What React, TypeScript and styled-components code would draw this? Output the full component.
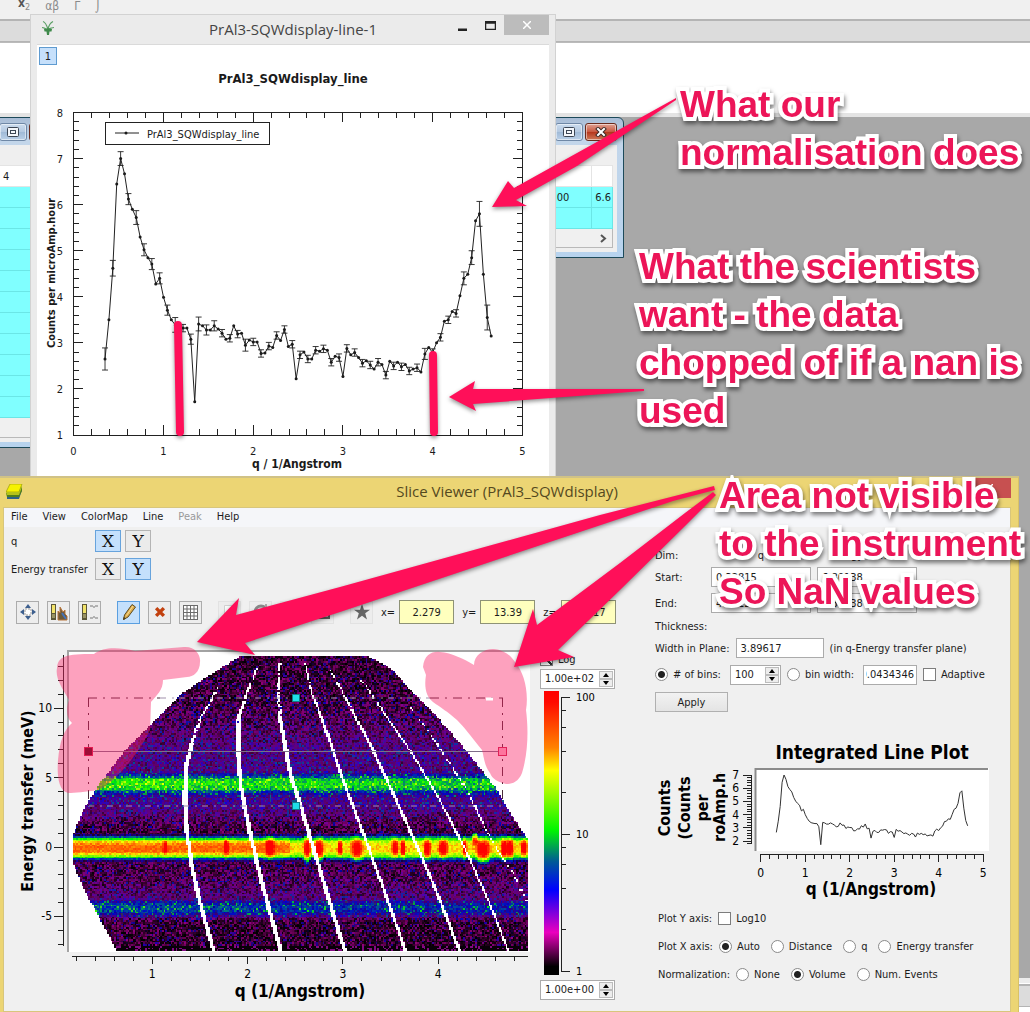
import React, { useEffect, useRef } from "react";
import styled, { createGlobalStyle } from "styled-components";

const ui = `"DejaVu Sans Condensed", "Noto Sans", sans-serif`;
const caption = `"Open Sans", "Noto Sans", sans-serif`;
const serif = `"DejaVu Serif", serif`;
const pink = "#ff0f59";

const GlobalStyle = createGlobalStyle`
  * { box-sizing: border-box; }
  body { margin: 0; font-family: ${ui}; font-size: 11px; color: #1c1c1c; }
  button, input { font: inherit; color: inherit; }
`;

/* ---------- measured data ---------- */

const BIN = 0.0434346;
const FIRST_Q = 0.351;
const COUNTS = [
  2.65, 3.5, 4.62, 6.45, 7.0, 6.67, 6.12, 5.9, 5.72, 5.3,
  5.02, 4.85, 4.71, 4.28, 4.4, 3.99, 3.71, 3.5, 3.39, 3.35,
  3.32, 3.32, 3.08, 1.72, 3.41, 3.37, 3.28, 3.28, 3.37, 3.3,
  3.21, 3.08, 3.1, 3.37, 3.19, 3.21, 2.95, 3.06, 3.02, 3.02,
  2.77, 2.78, 2.93, 2.9, 3.16, 3.05, 3.29, 2.92, 2.97, 2.22,
  2.74, 2.8, 2.65, 2.65, 2.84, 2.82, 2.87, 2.84, 2.58, 2.71,
  2.68, 2.27, 2.88, 2.74, 2.79, 2.68, 2.56, 2.61, 2.52, 2.43,
  2.58, 2.53, 2.3, 2.6, 2.5, 2.58, 2.48, 2.53, 2.39, 2.43,
  2.46, 2.37, 2.76, 2.9, 2.79, 3.0, 3.12, 3.47, 3.5, 3.68,
  3.64, 4.02, 4.4, 4.49, 4.85, 5.65, 5.8, 4.49, 3.55, 3.15,
];
const ERRORS: Record<number, number> = {
  0: 0.24, 2: 0.17, 4: 0.15, 6: 0.12, 8: 0.15, 10: 0.13, 12: 0.12, 14: 0.12, 16: 0.11,
  18: 0.16, 22: 0.11, 24: 0.15, 26: 0.11, 28: 0.11, 36: 0.13, 82: 0.12, 92: 0.14, 94: 0.15, 96: 0.27, 98: 0.27,
};
const POINTS = COUNTS.map((value, i) => ({
  q: FIRST_Q + i * BIN,
  value,
  error: i % 2 ? 0 : ERRORS[i] ?? 0.08,
}));

const range = (n: number) => Array.from({ length: n }, (_, i) => i);

/* ---------- main application behind the windows ---------- */

const Desktop = styled.main`
  position: relative;
  display: flex;
  flex-direction: column;
  min-height: 100vh;
  overflow: hidden;
  background: #f0f0f0;
`;
const FormatBar = styled.header`
  display: flex;
  align-items: flex-end;
  gap: 15px;
  height: 18px;
  padding: 0 18px 6px;
  font: 12px/12px ${ui};
  color: #8a8a8a;
  b { color: #555; }
  sub { font-size: 9px; line-height: 1; }
`;
const Band = styled.div`
  height: 23px;
  margin-top: 1px;
  background: #dcdcdc;
  border: solid #b4b4b4;
  border-width: 2px 0 1px;
`;
const Strip = styled.div`
  height: 75px;
  background: #fff;
  border: solid #bbb;
  border-width: 1px 0;
  border-bottom: 4px solid #e4e4e4;
`;
const Workspace = styled.section`
  flex: 1;
  background: #a8a8a8;
`;
const StatusArea = styled.footer`
  height: 34px;
  background: #fff;
  border-top: 5px solid #ececec;
`;

const MdiWindow = styled.section<{ $x: number; $w: number; $h: number }>`
  position: absolute;
  left: ${(p) => p.$x}px;
  top: 117px;
  width: ${(p) => p.$w}px;
  height: ${(p) => p.$h}px;
  display: flex;
  flex-direction: column;
  padding: 5px 6px;
  background: linear-gradient(#a9bdd6, #c3d6ea 22px, #b7d3ee);
  border: 1px solid #1d4a5a;
  border-radius: 6px 6px 0 0;
`;
const MdiButtons = styled.div`
  display: flex;
  justify-content: flex-end;
  gap: 2px;
  height: 18px;
`;
const MdiButton = styled.button<{ $close?: boolean }>`
  display: grid;
  place-items: center;
  width: ${(p) => (p.$close ? 32 : 28)}px;
  padding: 0;
  border: 1px solid ${(p) => (p.$close ? "#6a2a1c" : "#6f88a6")};
  border-radius: 3px;
  box-shadow: inset 0 0 0 1px #ffffff80;
  background: ${(p) =>
    p.$close ? "linear-gradient(#dfa193, #c8563d 50%, #b5351b 50%, #cf7a58)" : "linear-gradient(#cbdcee, #b3c8e0 50%, #9fb9d6 50%, #bad0e8)"};
`;
const MdiBody = styled.div`
  flex: 1;
  display: flex;
  flex-direction: column;
  margin-top: 4px;
  padding: 20px 4px 4px 0;
  background: #efefef;
`;
const MdiTable = styled.table`
  width: 100%;
  border-collapse: collapse;
  border: 1px solid #8a9096;
  background: #fff;
  th, td { height: 21px; padding: 0 3px; border: 1px solid #6be6e6; font-weight: 400; white-space: nowrap; }
  th { border-color: #e4e4e4; text-align: left; }
  td { background: #80ffff; text-align: right; }
  td:nth-child(1) { padding-right: 22px; }
  td:last-child { text-align: left; width: 20px; padding: 0 1px 0 3px; }
`;
const MdiScroll = styled.div`
  flex: 1;
  display: flex;
  justify-content: flex-end;
  align-items: center;
  padding-right: 5px;
  border: 1px solid #b9b9b9;
  border-top: 0;
  background: #f0f0f0;
`;

function MatrixWindow({ x, w, h, head, rows }: { x: number; w: number; h: number; head: string[]; rows: string[][] }) {
  return (
    <MdiWindow $x={x} $w={w} $h={h}>
      <MdiButtons>
        <MdiButton aria-label="Restore">
          <svg width="12" height="10" viewBox="0 0 12 10" fill="none" stroke="#3c4654">
            <rect x="0.5" y="0.5" width="11" height="9" rx="1" fill="#f4f7fb" />
            <rect x="3.5" y="3.5" width="5" height="3" />
          </svg>
        </MdiButton>
        <MdiButton $close aria-label="Close">
          <svg width="12" height="10" viewBox="0 0 12 10" stroke="#3f2a26" strokeWidth="4" strokeLinecap="square">
            <path d="M3 2l6 6M9 2l-6 6" />
            <path d="M3 2l6 6M9 2l-6 6" stroke="#fff" strokeWidth="2" />
          </svg>
        </MdiButton>
      </MdiButtons>
      <MdiBody>
        <MdiTable>
          <thead>
            <tr>{head.map((c, i) => <th key={i}>{c}</th>)}</tr>
          </thead>
          <tbody>
            {rows.map((r, i) => (
              <tr key={i}>{r.map((c, j) => <td key={j}>{c}</td>)}</tr>
            ))}
          </tbody>
        </MdiTable>
        <MdiScroll>
          <svg width="7" height="9" viewBox="0 0 7 9" fill="none" stroke="#555" strokeWidth="2">
            <path d="M1 1l4 3.500l-4 3.500" />
          </svg>
        </MdiScroll>
      </MdiBody>
    </MdiWindow>
  );
}

/* ---------- graph window ---------- */

const GraphWindow = styled.section`
  position: absolute;
  left: 30px;
  top: 14px;
  width: 526px;
  display: flex;
  flex-direction: column;
  padding: 0 6px;
  background: #ebebeb;
  border: 1px solid #d2d2d2;
`;
const GraphTitle = styled.div`
  display: grid;
  grid-template-columns: 130px 1fr 130px;
  height: 29px;
  color: #444;
  h2 { margin: 0; font: 15px/29px ${caption}; text-align: center; white-space: nowrap; }
  > svg { margin: 5px 4px; }
`;
const Controls = styled.div`
  display: flex;
  justify-content: flex-end;
  height: 20px;
`;
const Control = styled.button<{ $bg?: string; $w?: number }>`
  display: grid;
  place-items: center;
  width: ${(p) => p.$w ?? 28}px;
  padding: 0;
  border: 0;
  background: ${(p) => p.$bg ?? "transparent"};
`;
const GraphBody = styled.div`
  background: #fff;
  border-top: 1px solid #dadada;
  svg { display: block; }
`;
const LayerButton = styled.button`
  display: block;
  width: 18px;
  height: 18px;
  margin: 2px 2px 0;
  padding: 0;
  border: 1px solid #5f9bd0;
  background: #c6e0fb;
`;

function LineChart() {
  const X = (q: number) => 73.5 + q * 89.8;
  const Y = (v: number) => 435 - (v - 1) * 46.07;
  return (
    <svg width="100%" viewBox="37 65 512 412" fontFamily={ui} fontSize="11" fill="#1a1a1a">
      <text x="293" y="83" textAnchor="middle" fontSize="13" fontWeight="700">PrAl3_SQWdisplay_line</text>
      <g stroke="#222" fill="none" shapeRendering="crispEdges">
        <rect x="73.500" y="112.500" width="449" height="322.500" />
        {range(26).map((i) => {
          const x = X(i / 5);
          const len = i % 5 ? 6 : 10;
          return <path key={i} d={`M${x} 435v${-len}M${x} 112v${len}`} />;
        })}
        {range(36).map((i) => {
          const y = Y(1 + i / 5);
          const len = i % 5 ? 6 : 10;
          return <path key={i} d={`M73 ${y}h${len}M523 ${y}h${-len}`} />;
        })}
      </g>
      {range(6).map((i) => <text key={i} x={X(i)} y="455" textAnchor="middle">{i}</text>)}
      {range(8).map((i) => <text key={i} x="63" y={Y(i + 1) + 4} textAnchor="end">{i + 1}</text>)}
      <text x="297" y="468" textAnchor="middle" fontSize="12" fontWeight="700">q / 1/Angstrom</text>
      <text transform="translate(55 273) rotate(-90)" textAnchor="middle" fontWeight="700">Counts per microAmp.hour</text>
      <rect x="105.500" y="122.500" width="164" height="22" fill="#fff" stroke="#222" />
      <path d="M115 133h24" stroke="#222" />
      <circle cx="126" cy="133" r="1.500" />
      <text x="147" y="138">PrAl3_SQWdisplay_line</text>
      <g stroke="#222" fill="none">
        <polyline points={POINTS.map((p) => `${X(p.q)},${Y(p.value)}`).join(" ")} />
        {POINTS.filter((p) => p.error).map((p) => (
          <path key={p.q} strokeWidth="0.900" d={`M${X(p.q)} ${Y(p.value - p.error)}V${Y(p.value + p.error)}m-3 0h6M${X(p.q) - 3} ${Y(p.value - p.error)}h6`} />
        ))}
      </g>
      {POINTS.map((p) => <circle key={p.q} cx={X(p.q)} cy={Y(p.value)} r="1.500" />)}
    </svg>
  );
}

/* ---------- slice viewer window ---------- */

const ViewerWindow = styled.section`
  position: absolute;
  left: 0;
  right: 11px;
  top: 476px;
  display: flex;
  flex-direction: column;
  padding: 0 7px 0 3px;
  background: #ecd574;
  border-top: 2px solid #d0c286;
  border-right: 1px solid #d8c267;
  border-bottom: 1px solid #d9c779;
`;
const ViewerTitle = styled.div`
  display: grid;
  grid-template-columns: 180px 1fr 180px;
  height: 29px;
  color: #54491f;
  h2 { margin: 0; font: 15px/27px ${caption}; text-align: center; }
  > svg { margin: 6px 3px; }
`;
const Client = styled.div`
  background: #f0f0f0;
  border: 1px solid #d8c67c;
`;
const MenuBar = styled.nav`
  display: flex;
  gap: 15px;
  height: 19px;
  padding-left: 7px;
  padding-bottom: 2px;
  background: #f5f6f9;
`;
const MenuItem = styled.button`
  padding: 0;
  border: 0;
  background: none;
  &:disabled { color: #999; }
`;
const Columns = styled.div`
  display: grid;
  grid-template-columns: minmax(0, 1fr) 355px;
`;
const MainPane = styled.div`
  padding-top: 3px;
`;
const DimRow = styled.div`
  display: flex;
  align-items: center;
  gap: 4px;
  height: 22px;
  margin: 0 0 6px 7px;
  > span { width: 80px; white-space: nowrap; }
`;
const AxisButton = styled.button<{ $on?: boolean }>`
  width: 26px;
  height: 22px;
  padding: 0;
  border: 1px solid ${(p) => (p.$on ? "#67a3dc" : "#b4b4b4")};
  background: ${(p) => (p.$on ? "#c4e0fc" : "#ebebeb")};
  font: 17px/18px ${serif};
  color: #111;
`;
const Toolbar = styled.div`
  display: flex;
  align-items: center;
  gap: 8px;
  height: 24px;
  margin: 20px 0 26px 12px;
`;
const Tool = styled.button<{ $on?: boolean; $faint?: boolean; $lead?: boolean }>`
  display: grid;
  place-items: center;
  width: 23px;
  height: 23px;
  margin-left: ${(p) => (p.$lead ? 8 : 0)}px;
  padding: 0;
  border: 1px solid ${(p) => (p.$on ? "#5a9fe0" : p.$faint ? "#e2e2e2" : "#acacac")};
  background: ${(p) => (p.$on ? "#c4e0fc" : "#ededed")};
`;
const Coord = styled.label`
  display: flex;
  align-items: center;
  gap: 4px;
  white-space: nowrap;
  input {
    width: 55px;
    height: 24px;
    border: 1px solid #8e9276;
    background: #ffffbe;
    text-align: center;
    padding: 0;
  }
`;
const PlotRow = styled.div`
  display: flex;
  align-items: flex-start;
  svg { display: block; }
`;
const PlotColumn = styled.div`
  width: 463px;
`;
const PlotFrame = styled.div`
  position: relative;
  height: 302px;
  padding: 4px;
  background: #fff;
  border: 2px solid #a3a3a3;
  border-right: 0;
  border-bottom: 0;
  canvas { display: block; width: 455px; height: 295px; image-rendering: pixelated; }
`;
const Overlay = styled.svg`
  position: absolute;
  left: -2px;
  top: -2px;
`;
const ScaleColumn = styled.div`
  width: 80px;
  padding: 2px 0 0 10px;
`;
const CheckLabel = styled.label`
  display: inline-flex;
  align-items: center;
  gap: 5px;
  height: 14px;
  white-space: nowrap;
`;
const Check = styled.input`
  appearance: none;
  width: 13px;
  height: 13px;
  margin: 0;
  border: 1px solid #7d7d7d;
  background: #fff;
  &:checked { background: linear-gradient(45deg, transparent 42%, #333 42% 58%, transparent 58%) #fff; }
`;
const SpinBox = styled.div<{ $w: number }>`
  display: flex;
  width: ${(p) => p.$w}px;
  height: 20px;
  padding: 1px;
  border: 1px solid #ababab;
  background: #fff;
  input { flex: 1; min-width: 0; padding: 0 0 0 3px; border: 0; background: none; }
`;
const SpinButtons = styled.div`
  display: flex;
  flex-direction: column;
  width: 14px;
  button { flex: 1; display: grid; place-items: center; padding: 0; border: 1px solid #bcbcbc; background: #ededed; }
`;

const SidePane = styled.div`
  display: flex;
  flex-direction: column;
  padding: 18px 0 0;
`;
const FieldRow = styled.div<{ $h: number }>`
  display: flex;
  align-items: center;
  gap: 6px;
  height: ${(p) => p.$h}px;
  white-space: nowrap;
`;
const BinsRow = styled(FieldRow)`
  > label:not(:last-child) { margin-right: 3px; }
`;
const FieldName = styled.label`
  min-width: 50px;
`;
const TextField = styled.input<{ $w: number }>`
  width: ${(p) => p.$w}px;
  height: 20px;
  padding: 0 4px;
  border: 1px solid #ababab;
  background: #fff;
`;
/* Keeps the last digits in view when the value is wider than the box. */
const TailField = styled(TextField)`
  padding: 0 2px;
  direction: rtl;
`;
const DimName = styled.span`
  width: 100px;
  text-align: center;
`;
const Radio = styled.input`
  appearance: none;
  width: 13px;
  height: 13px;
  margin: 0;
  border: 1px solid #8a8a8a;
  border-radius: 50%;
  background: #fff;
  &:checked { background: radial-gradient(circle, #222 0 3px, #fff 4px); }
`;
const ApplyButton = styled.button`
  width: 73px;
  height: 20px;
  margin: 4px 0 29px;
  border: 1px solid #b0b0b0;
  background: linear-gradient(#f2f2f2, #e4e4e4);
`;
const ChoiceRow = styled.fieldset`
  display: flex;
  align-items: center;
  gap: 11px;
  height: 28px;
  margin: 0 0 0 3px;
  padding: 0;
  border: 0;
  white-space: nowrap;
  > span { margin-right: -5px; }
`;

function Spin({ value, w, label }: { value: string; w: number; label: string }) {
  return (
    <SpinBox $w={w}>
      <input defaultValue={value} aria-label={label} />
      <SpinButtons>
        <button aria-label="Increase"><svg width="6" height="4"><path d="M0 4l3-4l3 4z" /></svg></button>
        <button aria-label="Decrease"><svg width="6" height="4"><path d="M0 0l3 4l3-4z" /></svg></button>
      </SpinButtons>
    </SpinBox>
  );
}

/* Colour map, from the bottom of the scale (0) to its top (1). */
const STOPS: [number, number, number, number][] = [
  [0, 0, 0, 0], [0.03, 0, 0, 0], [0.15, 235, 0, 190], [0.3, 0, 0, 255], [0.4, 0, 90, 150],
  [0.51, 0, 245, 0], [0.72, 255, 255, 0], [0.8, 255, 130, 0], [0.96, 255, 10, 0], [1, 255, 0, 0],
];
function colorAt(t: number) {
  const v = Math.max(0, Math.min(1, t));
  const i = Math.max(1, STOPS.findIndex((s) => s[0] >= v));
  const a = STOPS[i - 1];
  const b = STOPS[i];
  const f = (v - a[0]) / (b[0] - a[0]);
  return [1, 2, 3].map((k) => a[k] + (b[k] - a[k]) * f);
}

type Knots = [number, number][];
/* Position along x of a curve whose knots are [y, x]; null outside its span. */
function xAt(knots: Knots, y: number) {
  for (let i = 1; i < knots.length; i++) {
    const [y0, x0] = knots[i - 1];
    const [y1, x1] = knots[i];
    if (y >= y0 && y <= y1) return x0 + ((x1 - x0) * (y - y0)) / (y1 - y0);
  }
  return null;
}
const LEFT_EDGE: Knots = [[650, 252], [656, 241], [673, 213], [695, 180], [728, 148], [753, 123], [783, 100], [810, 83], [835, 73], [863, 73], [888, 83], [913, 97], [948, 115], [960, 115]];
const RIGHT_EDGE: Knots = [[650, 360], [656, 368], [668, 390], [692, 413], [717, 437], [743, 460], [768, 480], [790, 497], [817, 513], [843, 530], [960, 530]];
const GAPS: { w: number; knots: Knots }[] = [
  { w: 4, knots: [[687, 218], [697, 213], [720, 200], [743, 192], [767, 186], [800, 185], [833, 187], [867, 192], [903, 200], [952, 214]] },
  { w: 4, knots: [[668, 257], [693, 247], [720, 238], [753, 238], [787, 241], [833, 250], [887, 263], [952, 281]] },
  { w: 4, knots: [[663, 280], [690, 278], [717, 280], [757, 287], [773, 290], [820, 305], [860, 317], [913, 333], [952, 345]] },
  { w: 3, knots: [[663, 305], [693, 312], [733, 327], [780, 343], [830, 362], [887, 383], [952, 406]] },
  { w: 3, knots: [[670, 330], [693, 343], [750, 373], [793, 393], [853, 420], [900, 440], [952, 460]] },
  { w: 2, knots: [[678, 360], [707, 380], [755, 413], [800, 440], [853, 467], [900, 488], [952, 509]] },
  { w: 1, knots: [[707, 410], [733, 430], [790, 467], [843, 493], [873, 513], [902, 527]] },
];
/* Hot spots along the elastic line: x, y, half width, half height. */
const SPOTS = [
  [165, 847, 2, 6], [226, 847, 2, 8], [270, 848, 4, 10], [307, 852, 3, 18], [319, 850, 4, 13], [340, 848, 2, 7],
  [357, 850, 5, 12], [395, 848, 3, 9], [403, 848, 2, 9], [427, 849, 3, 10], [443, 848, 4, 9], [465, 848, 2, 9], [475, 838, 3, 6],
  [483, 853, 6, 14], [504, 849, 3, 11], [510, 848, 3, 10], [524, 848, 3, 8],
];

function HeatMap() {
  const ref = useRef<HTMLCanvasElement>(null);
  useEffect(() => {
    const canvas = ref.current!;
    const ctx = canvas.getContext("2d")!;
    const { width, height } = canvas;
    const image = ctx.createImageData(width, height);
    let seed = 20143;
    const rnd = () => {
      seed = (seed * 1664525 + 1013904223) % 4294967296;
      return seed / 4294967296;
    };
    const bump = (d: number, s: number) => Math.exp(-(d * d) / (2 * s * s));
    const plateau = (d: number, s: number) => Math.exp(-Math.pow(Math.abs(d) / s, 3));
    for (let j = 0; j < height; j++) {
      const y = 656 + ((j + 0.5) * 295) / height;
      const left = xAt(LEFT_EDGE, y)!;
      const right = xAt(RIGHT_EDGE, y)!;
      const gaps = GAPS.map((g) => {
        const depth = (y - g.knots[0][0]) / 60;
        return {
          x: xAt(g.knots, y),
          half: (Math.min(1, 0.35 + depth * 0.65) * g.w) / 2,
          solid: Math.min(1, 0.5 + depth / 2) * (g.w < 2 ? 0.6 : 1),
        };
      });
      for (let i = 0; i < width; i++) {
        const x = 73 + ((i + 0.5) * 455) / width;
        const at = (j * width + i) * 4;
        const skip = rnd();
        const fade = (x - 73) / 455;
        const level =
          0.1 * bump(y - 764, 22) + 0.11 * bump(y - 804, 13) + 0.04 * bump(y - 730, 25) +
          0.03 * bump(y - 870, 14) + 0.08 * bump(y - 898, 12) +
          (0.35 - fade * 0.06) * plateau(y - 784, 9) + (0.25 - fade * 0.08) * plateau(y - 909, 8);
        const line = (x < 290 ? 0.84 : 0.74) * plateau(y - 848, x > 330 ? 13 : 12);
        let heat = 0;
        for (const [sx, sy, sw, sh] of SPOTS) heat += 0.34 * plateau(x - sx, sw) * plateau(y - sy, sh);
        const sample = () => {
          const n = rnd();
          const grain = n * 0.18 + (n > 0.9 ? 0.1 : 0);
          const t = Math.max(level + grain, line + heat + n * 0.12 - 0.06);
          const dim = t > 0.42 ? 1 : t > 0.3 ? 0.8 + (t - 0.3) * 1.7 : 0.12 + n * 0.62 + level * 1.6;
          return colorAt(t).map((c) => c * Math.min(1, dim));
        };
        const a = sample();
        const b = sample();
        let rgb = a.map((c, k) => c * 0.78 + b[k] * 0.22);
        if (y > 946) rgb = rnd() > 0.8 ? [130, 10, 130] : [8, 0, 8];
        const inGap = gaps.some((g) => g.x !== null && Math.abs(x - g.x) < Math.max(1, g.half) && skip < g.solid);
        if (x <= left || x >= right || inGap) rgb = [255, 255, 255];
        image.data[at] = rgb[0];
        image.data[at + 1] = rgb[1];
        image.data[at + 2] = rgb[2];
        image.data[at + 3] = 255;
      }
    }
    ctx.putImageData(image, 0, 0);
  }, []);
  return <canvas ref={ref} width={266} height={172} role="img" aria-label="Intensity map" />;
}

function YAxis() {
  const Y = (e: number) => 847 - e * 13.88;
  return (
    <svg width="63" height="302" viewBox="4 650 63 302" fontFamily={ui} fontSize="12">
      <text transform="translate(33 801) rotate(-90)" textAnchor="middle" fontSize="16" fontWeight="700">Energy transfer (meV)</text>
      <path d="M63.500 655V946" stroke="#222" shapeRendering="crispEdges" />
      {range(21).map((i) => {
        const e = i - 7;
        return <path key={i} d={`M63 ${Y(e)}h${e % 5 ? -5 : -9}`} stroke="#222" shapeRendering="crispEdges" />;
      })}
      {[10, 5, 0, -5].map((e) => <text key={e} x="52" y={Y(e) + 4} textAnchor="end">{e}</text>)}
    </svg>
  );
}
function XAxis() {
  const X = (q: number) => 57 + q * 95.3;
  return (
    <svg width="463" height="59" viewBox="67 952 463 59" fontFamily={ui} fontSize="12" textAnchor="middle">
      <path d="M72 956.500H528" stroke="#222" shapeRendering="crispEdges" />
      {range(24).map((i) => (
        <path key={i} d={`M${X((i + 1) / 5)} 956v${(i + 1) % 5 ? 5 : 8}`} stroke="#222" shapeRendering="crispEdges" />
      ))}
      {[1, 2, 3, 4].map((q) => <text key={q} x={X(q)} y="978">{q}</text>)}
      <text x="300" y="997" fontSize="17" fontWeight="700">q (1/Angstrom)</text>
    </svg>
  );
}
function Selection() {
  return (
    <Overlay width="463" height="302" viewBox="67 650 463 302" fill="none">
      <path d="M160 698H430M88 806H503" stroke="#a08fab" strokeDasharray="6 6 2 5" />
      <path d="M88 698H160M430 698H503M88.500 698V806M502.500 698V806" stroke="#4a2b38" strokeDasharray="9 6 2 6" />
      <path d="M88 751.500H503" stroke="#7d6e88" />
      <rect x="292.500" y="694.500" width="7" height="7" fill="#1fdfe8" stroke="#127b86" />
      <rect x="292.500" y="802.500" width="7" height="7" fill="#1fdfe8" stroke="#127b86" />
      <rect x="84.500" y="747.500" width="8" height="8" fill="#5c0018" stroke="#d61a48" />
      <rect x="498.500" y="747.500" width="8" height="8" fill="#ffb3c9" stroke="#cf2450" />
    </Overlay>
  );
}
function ColorScale() {
  const Y = (v: number) => 972 - Math.log10(v) * 137;
  return (
    <svg width="70" height="291" viewBox="540 690 70 291" fontFamily={ui} fontSize="11">
      <defs>
        <linearGradient id="scale" x1="0" y1="1" x2="0" y2="0">
          {STOPS.map((s) => <stop key={s[0]} offset={s[0]} stopColor={`rgb(${s[1]},${s[2]},${s[3]})`} />)}
        </linearGradient>
      </defs>
      <rect x="544" y="692" width="15" height="284" fill="url(#scale)" />
      <path d="M561.500 698V972" stroke="#222" />
      {[1, 2, 4, 6, 8, 10, 20, 40, 60, 80, 100].map((v) => (
        <path key={v} d={`M561 ${Y(v)}h${[1, 10, 100].includes(v) ? 9 : 5}`} stroke="#222" shapeRendering="crispEdges" />
      ))}
      {[1, 10, 100].map((v) => <text key={v} x="576" y={Y(v) + 4}>{v}</text>)}
    </svg>
  );
}
function IntegratedPlot() {
  const X = (q: number) => 760.7 + q * 44.5;
  const Y = (v: number) => 775 + (7 - v) * 13.2;
  return (
    <svg width="355" height="170" viewBox="655 741 355 170" fontFamily={ui} fontSize="12">
      <text x="872" y="759" textAnchor="middle" fontSize="19" fontWeight="700">Integrated Line Plot</text>
      <rect x="755" y="768" width="234" height="83" fill="#fff" />
      <path d="M755.500 851V769H988" fill="none" stroke="#8b8b8b" strokeWidth="2" />
      <g stroke="#222" fill="none" shapeRendering="crispEdges">
        <path d="M751.500 775V844M760 854.500H983" />
        {range(26).map((i) => <path key={i} d={`M${X(i / 5)} 854v${i % 5 ? 5 : 8}`} />)}
        {range(27).map((i) => <path key={i} d={`M751 ${Y(7 - i / 5)}h${i % 5 ? -4 : -8}`} />)}
      </g>
      {range(6).map((i) => <text key={i} x={X(i)} y="877" textAnchor="middle">{i}</text>)}
      {range(6).map((i) => <text key={i} x="739" y={Y(i + 2) + 4} textAnchor="end">{i + 2}</text>)}
      <polyline points={POINTS.map((p) => `${X(p.q)},${Y(p.value)}`).join(" ")} fill="none" stroke="#333" />
      <text x="871" y="895" textAnchor="middle" fontSize="17" fontWeight="700">q (1/Angstrom)</text>
      <g fontSize="16" fontWeight="700" textAnchor="middle">
        <text transform="translate(670 808) rotate(-90)">Counts</text>
        <text transform="translate(690 808) rotate(-90)">(Counts</text>
        <text transform="translate(708 808) rotate(-90)">per</text>
        <svg x="710" y="772" width="18" height="71" viewBox="710 772 18 71">
          <text transform="translate(725 808) rotate(-90)">microAmp.hour</text>
        </svg>
      </g>
    </svg>
  );
}

/* ---------- icons ---------- */

const RangeIcon = () => (
  <svg width="18" height="18" viewBox="0 0 18 18" fill="#3d5f8e">
    <path d="M9 1l3 4H6zM9 17l3-4H6zM1 9l4-3v6zM17 9l-4-3v6z" />
    <rect x="6" y="6" width="6" height="6" fill="#fff" stroke="#999" strokeDasharray="2 1" />
  </svg>
);
const ColourRangeIcon = ({ full }: { full?: boolean }) => (
  <svg width="18" height="18" viewBox="0 0 18 18">
    <rect x="1" y="1" width="5" height="16" fill="#5b5638" />
    <rect x="2" y="2" width="3" height="8" fill="#f2e36a" />
    <path d="M2 12h3M2 14h3" stroke="#d8cf90" />
    {full ? (
      <path d="M8 17V8l2 2V4l3 5l2-2v4l2 2v4z" fill="#6c5a3a" stroke="#b7753a" />
    ) : (
      <path d="M9 3h3M14 3h3M9 15h3M14 15h3M13 3v2M13 13v2" stroke="#777" fill="none" />
    )}
    {full && <path d="M12 10l4 6" stroke="#4773b8" strokeWidth="2" />}
  </svg>
);
const PencilIcon = () => (
  <svg width="18" height="18" viewBox="0 0 18 18" stroke="#5b4a21" strokeWidth="1">
    <path d="M3.500 16.500l1-4.500L12 1.500l3.500 2.500L8 14z" fill="#dfae4c" />
    <path d="M6.500 12.500L13 3" stroke="#f7dd9c" fill="none" />
    <path d="M3.500 16.500l.4-2l1.500 1z" fill="#222" />
  </svg>
);
const CrossIcon = () => (
  <svg width="12" height="12" viewBox="0 0 14 14" stroke="#c2410f" strokeWidth="4">
    <path d="M2.500 2.500l9 9M11.500 2.500l-9 9" />
  </svg>
);
const GridIcon = () => (
  <svg width="15" height="15" viewBox="0 0 15 15" fill="#fff" stroke="#6b6b6b">
    <rect x="0.500" y="0.500" width="14" height="14" />
    <path d="M4 0v15M7.500 0v15M11 0v15M0 4h15M0 7.500h15M0 11h15" />
  </svg>
);
const PageIcon = () => (
  <svg width="12" height="14" viewBox="0 0 12 14" fill="#fafafa" stroke="#d0d0d0"><path d="M.5.5h8l3 3v10H.5z" /></svg>
);
const DialIcon = () => (
  <svg width="18" height="18" viewBox="0 0 18 18" fill="none" stroke="#8a8a8a" strokeWidth="3"><circle cx="9" cy="9" r="6" /><path d="M14 1v6" stroke="#aaa" strokeWidth="2" /></svg>
);
const BoxIcon = () => (
  <svg width="14" height="14" viewBox="0 0 14 14" fill="#b9b9b9" stroke="#606060" strokeWidth="2"><rect x="1" y="1" width="12" height="12" /></svg>
);
const StarIcon = () => (
  <svg width="16" height="16" viewBox="0 0 16 16" fill="#666"><path d="M8 0l2 5.700h6l-4.800 3.600L13 15.500L8 11.800L3 15.500l1.800-6.200L0 5.700h6z" /></svg>
);
const MantidIcon = () => (
  <svg width="14" height="18" viewBox="0 0 14 18" fill="none" stroke="#5a9f64" strokeWidth="1.200">
    <path d="M2 1.500q3 1 5 8q1-6 5-8M1 7.500q3 0 5 3q3-3 7-3" />
    <path d="M3 9q4-1.500 8 0l-.5 2.500h-2L8 15H6l-.5-3.500h-2z" fill="#3f8a4b" stroke="none" />
  </svg>
);
const SliceIcon = () => (
  <svg width="17" height="16" viewBox="0 0 17 16">
    <path d="M1 11l3-5h12l-3 9H1z" fill="#2e5f8a" />
    <path d="M0 9l1 4h12l3-6V3z" fill="#4f7d1c" />
    <path d="M4 0h12l-3 8H0z" fill="#f6f200" stroke="#8d8b08" strokeWidth="0.600" />
    <path d="M0 8h13l3-8v3l-3 8H1z" fill="#b6c21a" />
  </svg>
);

/* ---------- annotations ---------- */

const Marks = styled.svg`
  position: absolute;
  left: 0;
  top: 0;
  pointer-events: none;
  g { filter: drop-shadow(0 2px 2px #00000070); }
  g:first-child { filter: none; }
`;
const Note = styled.p<{ $x: number; $y: number }>`
  position: absolute;
  left: ${(p) => p.$x}px;
  top: ${(p) => p.$y}px;
  margin: 0;
  font: 700 37px/48px "Liberation Sans", Arial, sans-serif;
  white-space: pre;
  color: #ec1558;
  -webkit-text-stroke: 8px #fff;
  stroke-linejoin: round;
  paint-order: stroke fill;
  filter: drop-shadow(1px 3px 2px #00000080);
  pointer-events: none;
`;

function Annotations() {
  return (
    <>
      <Marks width="1030" height="1012" viewBox="0 0 1030 1012">
        <g fill="#fa1e64" fillOpacity="0.420">
          <path d="M57 668C58 656 66 654 94 654C103 647 118 647 135 651L184 647C195 646 201 655 200 662C200 672 193 677 187 677L163 680C163 690 157 695 151 702L150 730C140 752 115 783 98 790C85 792 75 793 68 793C58 790 57 775 58 760C60 740 64 730 72 723C66 718 66 708 69 700C62 688 55 678 57 668Z" />
          <path d="M423 667C424 655 432 651 440 652C452 653 464 659 474 665C474 655 484 649 493 649C505 650 511 656 515 662C524 672 529 692 526 710C528 725 529 750 522 773C518 783 511 784 506 784C498 782 492 779 490 773C484 765 484 757 482 750C470 735 464 727 457 720C448 712 440 707 433 702C426 697 424 687 426 675Z" />
        </g>
        <path d="M486 699h7" stroke="#fff" strokeWidth="3" />
        <g fill={pink}>
          <path d="M676 98L514 188L508 181L492 207L527 206L516 200L577 166L676 100Z" />
          <path d="M644 389L473 389L475 381L449 397L476 411L473 404L644 391Z" />
          <path d="M714 486L600 515L340 587L236 615L239 598L197 642L255 655L245 643L340 612L673 501L715 490Z" />
          <path d="M713 492L685 513L620 563L537 625L533 609L514 667L574 657L558 650L620 590L685 526L716 495Z" />
          <path d="M178 325L180 432M433 355L434 432" stroke={pink} strokeWidth="8" strokeLinecap="round" />
        </g>
      </Marks>
      <Note $x={680} $y={81}>{"What our\nnormalisation does"}</Note>
      <Note $x={639} $y={243}>{"What the scientists\nwant - the data\nchopped of if a nan is\nused"}</Note>
      <Note $x={719} $y={472}>{"Area not visible\nto the instrument\nSo NaN values"}</Note>
    </>
  );
}

function Choice({ group, label, on }: { group: string; label: string; on?: boolean }) {
  return (
    <CheckLabel>
      <Radio type="radio" name={group} defaultChecked={on} />
      {label}
    </CheckLabel>
  );
}

export default function App() {
  return (
    <Desktop>
      <GlobalStyle />
      <FormatBar>
        <span><b>x</b><sub>2</sub></span>
        <span>αβ</span>
        <span>Γ</span>
        <span>⌡</span>
      </FormatBar>
      <Band />
      <Strip />
      <Workspace />
      <StatusArea><Band /></StatusArea>

      <MatrixWindow x={-8} w={76} h={331} head={["4", ""]} rows={range(11).map(() => ["", ""])} />
      <MatrixWindow x={500} w={124} h={141} head={["", ""]} rows={[["00", "6.6"], ["", ""]]} />

      <GraphWindow>
        <GraphTitle>
          <MantidIcon />
          <h2>PrAl3-SQWdisplay-line-1</h2>
          <Controls>
            <Control aria-label="Minimize"><svg width="9" height="12"><path d="M0 11h9" stroke="#222" strokeWidth="3" /></svg></Control>
            <Control aria-label="Maximize"><svg width="11" height="9"><path d="M.5.5h10v8H.5zM0 2h11" fill="none" stroke="#222" strokeWidth="1.500" /></svg></Control>
            <Control $w={45} $bg="#bcbcbc" aria-label="Close"><svg width="8" height="8"><path d="M0 0l8 8M8 0l-8 8" stroke="#fff" strokeWidth="1.500" /></svg></Control>
          </Controls>
        </GraphTitle>
        <GraphBody>
          <LayerButton>1</LayerButton>
          <LineChart />
        </GraphBody>
      </GraphWindow>

      <ViewerWindow>
        <ViewerTitle>
          <SliceIcon />
          <h2>Slice Viewer (PrAl3_SQWdisplay)</h2>
          <Controls>
            <Control aria-label="Minimize"><svg width="9" height="12"><path d="M0 11h9" stroke="#222" strokeWidth="3" /></svg></Control>
            <Control aria-label="Maximize"><svg width="11" height="9"><path d="M.5.5h10v8H.5z" fill="none" stroke="#222" /></svg></Control>
            <Control $w={45} $bg="#c75050" aria-label="Close"><svg width="8" height="8"><path d="M0 0l8 8M8 0l-8 8" stroke="#fff" strokeWidth="1.500" /></svg></Control>
          </Controls>
        </ViewerTitle>
        <Client>
          <MenuBar>
            {["File", "View", "ColorMap", "Line", "Peak", "Help"].map((m) => (
              <MenuItem key={m} disabled={m === "Peak"}>{m}</MenuItem>
            ))}
          </MenuBar>
          <Columns>
            <MainPane>
              <DimRow><span>q</span><AxisButton $on>X</AxisButton><AxisButton>Y</AxisButton></DimRow>
              <DimRow><span>Energy transfer</span><AxisButton>X</AxisButton><AxisButton $on>Y</AxisButton></DimRow>
              <Toolbar>
                <Tool aria-label="View extents"><RangeIcon /></Tool>
                <Tool aria-label="Full colour range"><ColourRangeIcon full /></Tool>
                <Tool aria-label="Slice colour range"><ColourRangeIcon /></Tool>
                <Tool $on $lead aria-label="Draw line"><PencilIcon /></Tool>
                <Tool aria-label="Clear line"><CrossIcon /></Tool>
                <Tool aria-label="Snap to grid"><GridIcon /></Tool>
                <Tool $faint $lead aria-label="New"><PageIcon /></Tool>
                <Tool $faint aria-label="Rebin"><DialIcon /></Tool>
                <Tool $faint aria-label="Lock"><PageIcon /></Tool>
                <Tool $faint aria-label="Overlay"><BoxIcon /></Tool>
                <Tool $faint $lead aria-label="Peaks"><StarIcon /></Tool>
                <Coord>x=<input defaultValue="2.279" /></Coord>
                <Coord>y=<input defaultValue="13.39" /></Coord>
                <Coord>z=<input defaultValue="1.6017" /></Coord>
              </Toolbar>
              <PlotRow>
                <YAxis />
                <PlotColumn>
                  <PlotFrame>
                    <HeatMap />
                    <Selection />
                  </PlotFrame>
                  <XAxis />
                </PlotColumn>
                <ScaleColumn>
                  <CheckLabel><Check type="checkbox" defaultChecked />Log</CheckLabel>
                  <Spin value="1.00e+02" w={75} label="Maximum" />
                  <ColorScale />
                  <Spin value="1.00e+00" w={75} label="Minimum" />
                </ScaleColumn>
              </PlotRow>
            </MainPane>
            <SidePane>
              <FieldRow $h={20}><FieldName as="span">Dim:</FieldName><DimName>q</DimName><DimName>Energy transfer</DimName></FieldRow>
              <FieldRow $h={24}>
                <FieldName htmlFor="start">Start:</FieldName>
                <TextField id="start" $w={100} defaultValue="0.32815" />
                <TextField $w={100} defaultValue="6.80138" aria-label="Start, energy" />
              </FieldRow>
              <FieldRow $h={28}>
                <FieldName htmlFor="end">End:</FieldName>
                <TextField id="end" $w={100} defaultValue="4.67128" />
                <TextField $w={100} defaultValue="6.80138" aria-label="End, energy" />
              </FieldRow>
              <FieldRow $h={18}>Thickness:</FieldRow>
              <FieldRow $h={26}>
                <label htmlFor="width">Width in Plane:</label>
                <TextField id="width" $w={88} defaultValue="3.89617" />
                (in q-Energy transfer plane)
              </FieldRow>
              <BinsRow $h={27}>
                <Choice group="bins" label="# of bins:" on />
                <Spin value="100" w={51} label="Number of bins" />
                <Choice group="bins" label="bin width:" />
                <TailField $w={54} defaultValue="0.0434346" aria-label="Bin width" />
                <CheckLabel><Check type="checkbox" />Adaptive</CheckLabel>
              </BinsRow>
              <ApplyButton>Apply</ApplyButton>
              <IntegratedPlot />
              <ChoiceRow><span>Plot Y axis:</span><CheckLabel><Check type="checkbox" />Log10</CheckLabel></ChoiceRow>
              <ChoiceRow>
                <span>Plot X axis:</span>
                <Choice group="xaxis" label="Auto" on />
                <Choice group="xaxis" label="Distance" />
                <Choice group="xaxis" label="q" />
                <Choice group="xaxis" label="Energy transfer" />
              </ChoiceRow>
              <ChoiceRow>
                <span>Normalization:</span>
                <Choice group="norm" label="None" />
                <Choice group="norm" label="Volume" on />
                <Choice group="norm" label="Num. Events" />
              </ChoiceRow>
            </SidePane>
          </Columns>
        </Client>
      </ViewerWindow>
      <Annotations />
    </Desktop>
  );
}
